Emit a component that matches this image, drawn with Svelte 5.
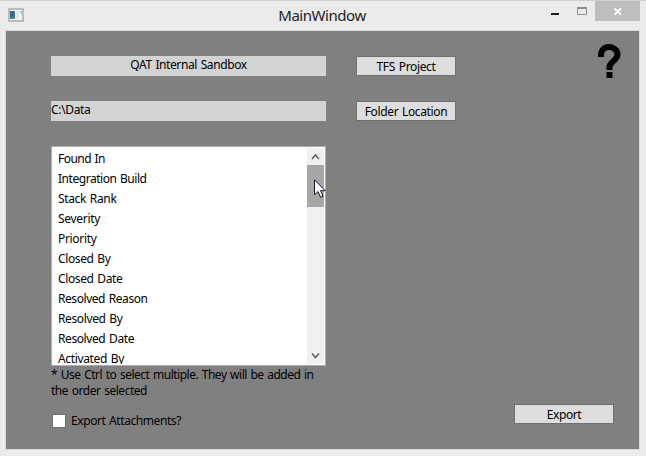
<script>
  const fields = [
    ['Found In', 47], ['Integration Build', 88.5], ['Stack Rank', 58.5],
    ['Severity', 42], ['Priority', 38.5], ['Closed By', 52.5],
    ['Closed Date', 64.5], ['Resolved Reason', 89.5], ['Resolved By', 64.5],
    ['Resolved Date', 76], ['Activated By', 66]
  ];

  // Spreads the letters of a label so that it takes the given width.
  function fit(node, width) {
    const natural = node.getBoundingClientRect().width;
    node.style.letterSpacing = (width - natural) / node.textContent.length + 'px';
  }
</script>

<div class="window">
  <header>
    <svg class="app" width="16" height="14" viewBox="0 0 16 14">
      <rect x="1" y="1" width="14" height="12" fill="#f4f5f5" stroke="#b9bdbc" stroke-width="2" />
      <rect x="2" y="3" width="5" height="8" fill="#39758c" />
      <path d="M2 3h3v5H2z" fill="#3f6590" />
      <path d="M2 9h5v2H2z" fill="#55807f" />
      <rect x="8" y="3" width="3" height="8" fill="#e3e6e7" />
      <path d="M11 3h3v4z" fill="#9ccfcb" />
    </svg>
    <h1><span use:fit={87.5}>MainWindow</span></h1>
    <div class="controls">
      <svg width="85" height="20" viewBox="0 0 85 20">
        <rect x="40" width="45" height="20" fill="#bcbebd" />
        <rect x="-4" y="12" width="8" height="2" fill="#261d29" />
        <path d="M22.500 7v6.500h9V7z" fill="none" stroke="#8c8c89" />
        <path d="M22 7h10" stroke="#8c8c89" stroke-width="2" />
        <path d="M59.500 7.500l6.500 6M66 7.500l-6.500 6" stroke="#fff" stroke-width="1.800" />
      </svg>
    </div>
  </header>

  <main>
    <section class="left">
      <div class="box center"><span use:fit={116.5}>QAT Internal Sandbox</span></div>
      <div class="box"><span use:fit={39.5}>C:\Data</span></div>
      <div class="list">
        <ul>
          {#each fields as [name, width]}
            <li><span use:fit={width}>{name}</span></li>
          {/each}
        </ul>
        <div class="scroll">
          <svg width="17" height="17" viewBox="0 0 17 17"><path d="M5 11l3.500-4 3.500 4" /></svg>
          <div class="thumb"></div>
          <svg width="17" height="17" viewBox="0 0 17 17"><path d="M5 6.500l3.500 4 3.500-4" /></svg>
        </div>
        <svg class="cursor" width="13" height="20" viewBox="0 0 13 20">
          <path d="M.5.8v15l3.500-3.300 2.600 5.800 2.400-1-2.500-5.600h4.700z" fill="#fff" stroke="#17142b" />
        </svg>
      </div>
      <p>
        <span use:fit={262.5}>* Use Ctrl to select multiple. They will be added in</span><br />
        <span use:fit={96}>the order selected</span>
      </p>
      <div class="check"><i></i><span use:fit={110}>Export Attachments?</span></div>
    </section>

    <section class="middle">
      <button><span use:fit={59}>TFS Project</span></button>
      <button><span use:fit={82.5}>Folder Location</span></button>
    </section>

    <section class="right">
      <svg width="24" height="36" viewBox="0 0 24 36">
        <path d="M3 13v-1.500C3 6.500 6.200 3 11 3s8.500 3.300 8.500 7.300c0 3-1.500 4.700-4 6.700s-4 3.500-4 6V26" fill="none" stroke="#000" stroke-width="6" />
        <rect x="8.500" y="28" width="6" height="6" />
      </svg>
      <button><span use:fit={34.5}>Export</span></button>
    </section>
  </main>
</div>

<style>
  :global(body) { margin: 0; }
  .window {
    box-sizing: border-box;
    width: 646px;
    height: 456px;
    padding: 0 6px 6px 5px;
    border-top: 1px solid #d0d0d0;
    background: #ebebeb;
    color: #000;
    font: 12px/16px "Noto Sans", sans-serif;
    word-spacing: 1px;
    overflow: hidden;
  }
  span { white-space: nowrap; }
  header { display: flex; height: 29px; }
  .app { margin: 7px 0 0 3px; }
  h1 {
    flex: 1;
    margin: 0 0 0 65px;
    font-size: 15px;
    font-weight: 400;
    line-height: 29px;
    text-align: center;
    color: #222;
  }
  .controls { width: 85px; }
  .controls svg { display: block; overflow: visible; }
  main {
    box-sizing: border-box;
    display: flex;
    width: 635px;
    height: 420px;
    border: 1px solid #d9d9d9;
    background: #808080;
  }
  section { display: flex; flex-direction: column; padding-top: 25px; }
  .left { width: 275px; margin-left: 45px; }
  .box {
    flex: none;
    height: 20px;
    margin-bottom: 25px;
    background: #d3d3d3;
    line-height: 18px;
  }
  .center { text-align: center; }
  .list {
    position: relative;
    box-sizing: border-box;
    flex: none;
    display: flex;
    height: 220px;
    padding: 1px;
    border: 1px solid #abadb3;
    background: #fff;
  }
  ul {
    flex: 1;
    margin: 0;
    padding: 1px 0 0 5px;
    list-style: none;
    overflow: hidden;
  }
  li { height: 20px; line-height: 20px; }
  .scroll { display: flex; flex-direction: column; width: 17px; background: #f0f0f0; }
  .scroll svg { display: block; }
  .scroll path { fill: none; stroke: #606060; stroke-width: 1.5; }
  .thumb { height: 42px; margin-bottom: auto; background: #a6a6a6; }
  .cursor { position: absolute; left: 262px; top: 32px; }
  p { margin: 1px 0 0; }
  .check { display: flex; align-items: center; height: 16px; margin-top: 14px; }
  i {
    box-sizing: border-box;
    width: 14px;
    height: 14px;
    margin: 0 5px 0 1px;
    border: 1px solid #707070;
    background: #fff;
  }
  .middle { width: 100px; margin-left: 30px; gap: 25px; }
  button {
    box-sizing: border-box;
    width: 100px;
    height: 20px;
    padding: 1px 0 0;
    border: 1px solid #707070;
    background: #ddd;
    color: #000;
    font: inherit;
    line-height: 18px;
    word-spacing: inherit;
  }
  .right {
    flex: 1;
    box-sizing: border-box;
    padding: 13px 25px 25px 0;
    align-items: flex-end;
    justify-content: space-between;
  }
  .right svg { margin-right: -8px; }
</style>
